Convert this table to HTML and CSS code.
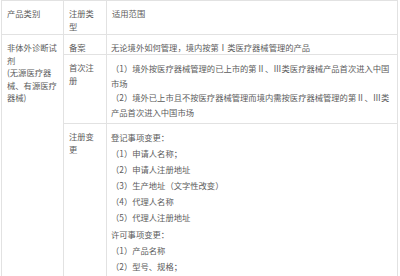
FILE: index.html
```html
<!DOCTYPE html>
<html lang="zh-CN">
<head>
<meta charset="utf-8">
<link rel="stylesheet" href="styles.css">
</head>
<body>
<table class="reg-table">
  <colgroup>
    <col class="c1">
    <col class="c2">
    <col class="c3">
  </colgroup>
  <thead>
    <tr class="head-row">
      <th>产品类别</th>
      <th>注册类型</th>
      <th>适用范围</th>
    </tr>
  </thead>
  <tbody>
    <tr class="row-a">
      <td rowspan="3" class="cat">非体外诊断试剂<br>(无源医疗器械、有源医疗器械)</td>
      <td class="type">备案</td>
      <td class="scope">无论境外如何管理，境内按第Ⅰ类医疗器械管理的产品</td>
    </tr>
    <tr class="row-b">
      <td class="type">首次注册</td>
      <td class="scope">
        <p>（1）境外按医疗器械管理的已上市的第Ⅱ、Ⅲ类医疗器械产品首次进入中国市场</p>
        <p>（2）境外已上市且不按医疗器械管理而境内需按医疗器械管理的第Ⅱ、Ⅲ类产品首次进入中国市场</p>
      </td>
    </tr>
    <tr class="row-c">
      <td class="type">注册变更</td>
      <td class="scope list">
        <p>登记事项变更：</p>
        <p>（1）申请人名称；</p>
        <p>（2）申请人注册地址</p>
        <p>（3）生产地址（文字性改变）</p>
        <p>（4）代理人名称</p>
        <p>（5）代理人注册地址</p>
        <p>许可事项变更：</p>
        <p>（1）产品名称</p>
        <p>（2）型号、规格；</p>
      </td>
    </tr>
  </tbody>
</table>
</body>
</html>
```

FILE: styles.css
```css
html, body {
  margin: 0;
  padding: 0;
  background: #ffffff;
}

body {
  font-family: "Noto Sans CJK SC", "Noto Sans", sans-serif;
  font-size: 8.3px;
  color: #5c5c5c;
}

.reg-table {
  margin-left: 1px;
  width: 396px;
  table-layout: fixed;
  border-collapse: collapse;
  border: 1px solid #e2e2e2;
}

.c1 { width: 62px; }
.c2 { width: 43px; }
.c3 { width: 291px; }

.reg-table th,
.reg-table td {
  border: 1px solid #e2e2e2;
  vertical-align: top;
  text-align: left;
  font-weight: normal;
  padding: 6px 5px 0 5px;
  line-height: 12.6px;
  word-break: break-all;
}

.head-row th {
  height: 27px;
  padding-top: 6px;
}

.reg-table td.scope {
  padding-left: 4px;
  padding-right: 1px;
  line-height: 14px;
}

.row-a td {
  height: 13px;
}

.row-a td.scope {
  line-height: 13px;
}

.row-b td.scope {
  padding-top: 6px;
  padding-bottom: 4px;
}

.scope p {
  margin: 0;
}

.row-b td.scope p {
  line-height: 14.5px;
}

.row-c td.list {
  padding-top: 5px;
  padding-bottom: 20px;
}

.row-c td.list p {
  line-height: 16.1px;
}
```
